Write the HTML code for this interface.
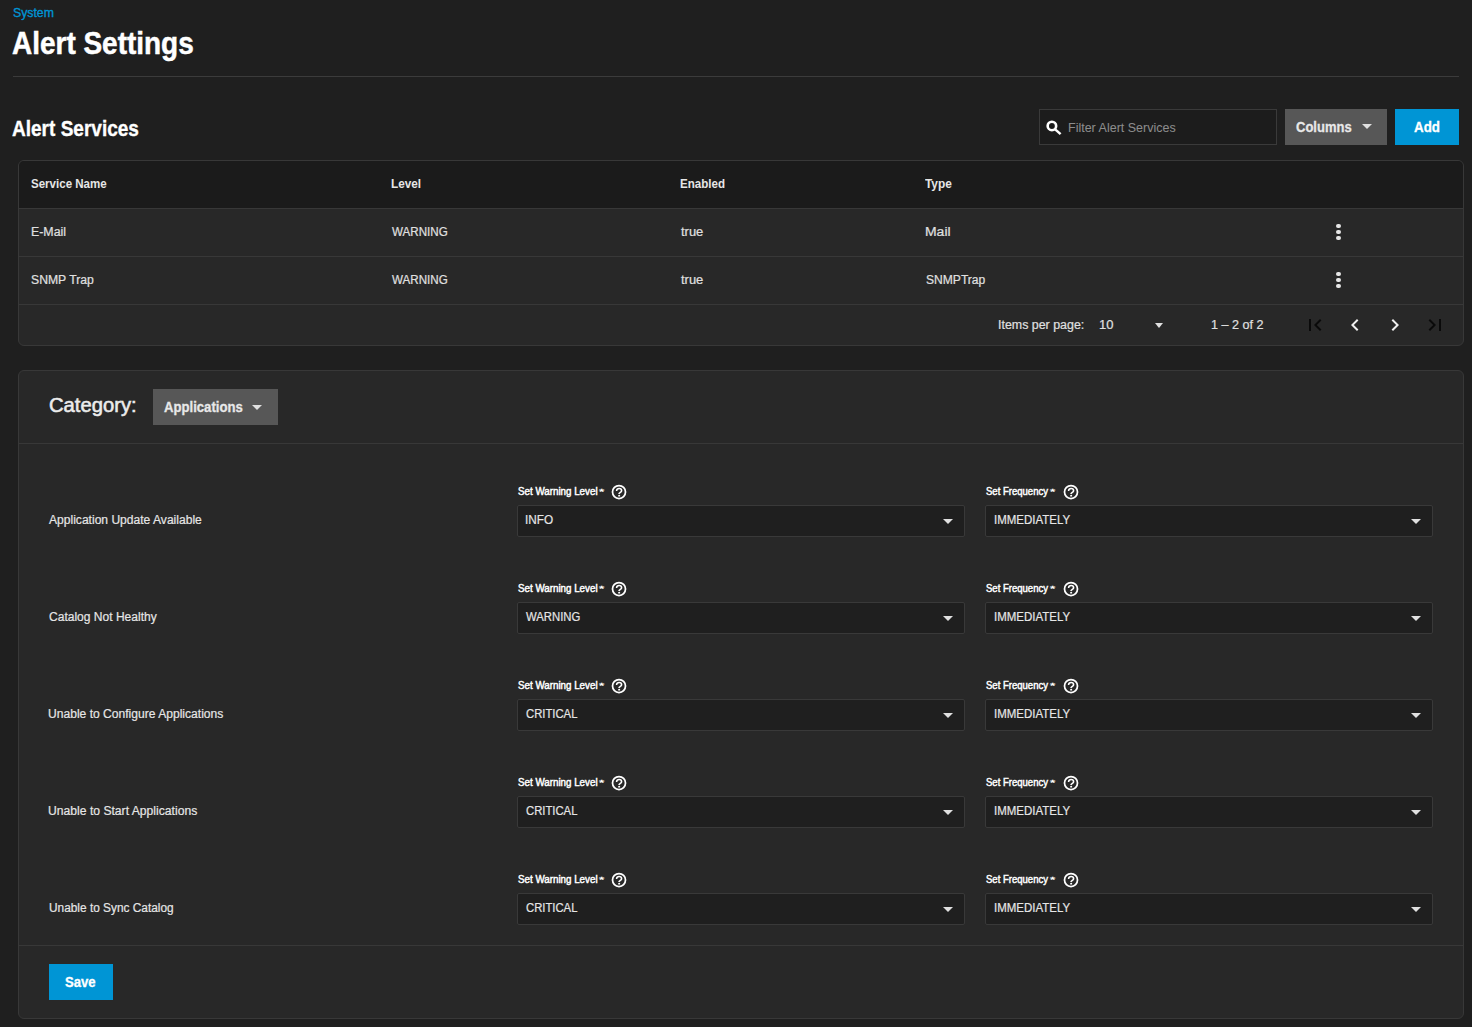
<!DOCTYPE html>
<html><head><meta charset="utf-8"><title>Alert Settings</title>
<style>
html,body{margin:0;padding:0;}
body{width:1472px;height:1027px;overflow:hidden;background:#1f1f1f;position:relative;font-family:"Liberation Sans",sans-serif;}
.box{position:absolute;box-sizing:content-box;}
.t{position:absolute;white-space:nowrap;line-height:normal;transform-origin:0 0;}
.tri{position:absolute;width:0;height:0;}
.ic{position:absolute;}
.dot{position:absolute;width:4.6px;height:4.6px;border-radius:50%;background:#e6e6e6;}
</style></head><body>
<div class="box" style="left:13px;top:76px;width:1446px;height:1px;background:#3b3b3b"></div>
<div class="box" style="left:1039px;top:109px;width:236px;height:34px;border:1px solid #3a3a3a;background:#1c1c1c"></div>
<svg class="ic" style="left:1044px;top:118px" width="20" height="20" viewBox="0 0 20 20"><circle cx="7.9" cy="7.95" r="4.25" fill="none" stroke="#fff" stroke-width="2.6"/><path d="M10.9 11.1 L16.6 16.1" stroke="#fff" stroke-width="2.5" stroke-linecap="butt"/></svg>
<div class="box" style="left:1285px;top:109px;width:102px;height:36px;background:#575757"></div>
<div class="tri" style="left:1362px;top:124px;border-left:5.0px solid transparent;border-right:5.0px solid transparent;border-top:5px solid #e0e0e0"></div>
<div class="box" style="left:1395px;top:109px;width:64px;height:36px;background:#0095d5"></div>
<div class="box" style="left:18px;top:160px;width:1444px;height:184px;border:1px solid #383838;border-radius:6px;background:#282828;overflow:hidden"><div class="box" style="left:0;top:0;width:1444px;height:47px;background:#1b1b1b;border-bottom:1px solid #383838"></div><div class="box" style="left:0;top:95px;width:1444px;height:1px;background:#383838"></div><div class="box" style="left:0;top:143px;width:1444px;height:1px;background:#383838"></div></div>
<div class="dot" style="left:1336.4px;top:223.7px"></div>
<div class="dot" style="left:1336.4px;top:229.7px"></div>
<div class="dot" style="left:1336.4px;top:235.7px"></div>
<div class="dot" style="left:1336.4px;top:271.7px"></div>
<div class="dot" style="left:1336.4px;top:277.7px"></div>
<div class="dot" style="left:1336.4px;top:283.7px"></div>
<div class="tri" style="left:1154.5px;top:323px;border-left:4.75px solid transparent;border-right:4.75px solid transparent;border-top:5px solid #e0e0e0"></div>
<svg class="ic" style="left:1303px;top:313px" width="24" height="24" viewBox="0 0 24 24"><path fill="#0a0a0a" d="M18.41 16.59L13.82 12l4.59-4.59L17 6l-6 6 6 6zM6 6h2v12H6z"/></svg>
<svg class="ic" style="left:1343px;top:313px" width="24" height="24" viewBox="0 0 24 24"><path fill="#f0f0f0" d="M15.41 7.41L14 6l-6 6 6 6 1.41-1.41L10.83 12z"/></svg>
<svg class="ic" style="left:1383px;top:313px" width="24" height="24" viewBox="0 0 24 24"><path fill="#f0f0f0" d="M10 6L8.59 7.41 13.17 12l-4.58 4.59L10 18l6-6z"/></svg>
<svg class="ic" style="left:1423px;top:313px" width="24" height="24" viewBox="0 0 24 24"><path fill="#0a0a0a" d="M5.59 7.41L10.18 12l-4.59 4.59L7 18l6-6-6-6zM16 6h2v12h-2z"/></svg>
<div class="box" style="left:18px;top:370px;width:1444px;height:647px;border:1px solid #383838;border-radius:6px;background:#282828"><div class="box" style="left:0;top:72px;width:1444px;height:1px;background:#383838"></div><div class="box" style="left:0;top:574px;width:1444px;height:1px;background:#383838"></div></div>
<div class="box" style="left:153px;top:389px;width:125px;height:36px;background:#575757"></div>
<div class="tri" style="left:252px;top:405.2px;border-left:5.25px solid transparent;border-right:5.25px solid transparent;border-top:5.2px solid #e0e0e0"></div>
<div class="box" style="left:517px;top:505px;width:446px;height:30px;border:1px solid #393939;border-radius:2px;background:#1f1f1f"></div>
<div class="box" style="left:985px;top:505px;width:446px;height:30px;border:1px solid #393939;border-radius:2px;background:#1f1f1f"></div>
<div class="tri" style="left:943px;top:519px;border-left:5.0px solid transparent;border-right:5.0px solid transparent;border-top:5px solid #e0e0e0"></div>
<div class="tri" style="left:1410.5px;top:519px;border-left:5.0px solid transparent;border-right:5.0px solid transparent;border-top:5px solid #e0e0e0"></div>
<svg class="ic" style="left:609.3px;top:482.0px" width="20" height="20" viewBox="0 0 20 20"><circle cx="10" cy="10" r="6.5" fill="none" stroke="#fff" stroke-width="1.75"/><path d="M7.6 8.9 C7.6 7.4 8.7 6.5 10.1 6.5 C11.5 6.5 12.6 7.4 12.6 8.7 C12.6 10.1 10.9 10.3 10.2 11.4 L10.1 12.2" fill="none" stroke="#fff" stroke-width="1.6"/><rect x="9.2" y="13.0" width="1.9" height="1.5" fill="#fff"/></svg>
<svg class="ic" style="left:1061.0px;top:482.0px" width="20" height="20" viewBox="0 0 20 20"><circle cx="10" cy="10" r="6.5" fill="none" stroke="#fff" stroke-width="1.75"/><path d="M7.6 8.9 C7.6 7.4 8.7 6.5 10.1 6.5 C11.5 6.5 12.6 7.4 12.6 8.7 C12.6 10.1 10.9 10.3 10.2 11.4 L10.1 12.2" fill="none" stroke="#fff" stroke-width="1.6"/><rect x="9.2" y="13.0" width="1.9" height="1.5" fill="#fff"/></svg>
<div class="box" style="left:517px;top:602px;width:446px;height:30px;border:1px solid #393939;border-radius:2px;background:#1f1f1f"></div>
<div class="box" style="left:985px;top:602px;width:446px;height:30px;border:1px solid #393939;border-radius:2px;background:#1f1f1f"></div>
<div class="tri" style="left:943px;top:616px;border-left:5.0px solid transparent;border-right:5.0px solid transparent;border-top:5px solid #e0e0e0"></div>
<div class="tri" style="left:1410.5px;top:616px;border-left:5.0px solid transparent;border-right:5.0px solid transparent;border-top:5px solid #e0e0e0"></div>
<svg class="ic" style="left:609.3px;top:579.0px" width="20" height="20" viewBox="0 0 20 20"><circle cx="10" cy="10" r="6.5" fill="none" stroke="#fff" stroke-width="1.75"/><path d="M7.6 8.9 C7.6 7.4 8.7 6.5 10.1 6.5 C11.5 6.5 12.6 7.4 12.6 8.7 C12.6 10.1 10.9 10.3 10.2 11.4 L10.1 12.2" fill="none" stroke="#fff" stroke-width="1.6"/><rect x="9.2" y="13.0" width="1.9" height="1.5" fill="#fff"/></svg>
<svg class="ic" style="left:1061.0px;top:579.0px" width="20" height="20" viewBox="0 0 20 20"><circle cx="10" cy="10" r="6.5" fill="none" stroke="#fff" stroke-width="1.75"/><path d="M7.6 8.9 C7.6 7.4 8.7 6.5 10.1 6.5 C11.5 6.5 12.6 7.4 12.6 8.7 C12.6 10.1 10.9 10.3 10.2 11.4 L10.1 12.2" fill="none" stroke="#fff" stroke-width="1.6"/><rect x="9.2" y="13.0" width="1.9" height="1.5" fill="#fff"/></svg>
<div class="box" style="left:517px;top:699px;width:446px;height:30px;border:1px solid #393939;border-radius:2px;background:#1f1f1f"></div>
<div class="box" style="left:985px;top:699px;width:446px;height:30px;border:1px solid #393939;border-radius:2px;background:#1f1f1f"></div>
<div class="tri" style="left:943px;top:713px;border-left:5.0px solid transparent;border-right:5.0px solid transparent;border-top:5px solid #e0e0e0"></div>
<div class="tri" style="left:1410.5px;top:713px;border-left:5.0px solid transparent;border-right:5.0px solid transparent;border-top:5px solid #e0e0e0"></div>
<svg class="ic" style="left:609.3px;top:676.0px" width="20" height="20" viewBox="0 0 20 20"><circle cx="10" cy="10" r="6.5" fill="none" stroke="#fff" stroke-width="1.75"/><path d="M7.6 8.9 C7.6 7.4 8.7 6.5 10.1 6.5 C11.5 6.5 12.6 7.4 12.6 8.7 C12.6 10.1 10.9 10.3 10.2 11.4 L10.1 12.2" fill="none" stroke="#fff" stroke-width="1.6"/><rect x="9.2" y="13.0" width="1.9" height="1.5" fill="#fff"/></svg>
<svg class="ic" style="left:1061.0px;top:676.0px" width="20" height="20" viewBox="0 0 20 20"><circle cx="10" cy="10" r="6.5" fill="none" stroke="#fff" stroke-width="1.75"/><path d="M7.6 8.9 C7.6 7.4 8.7 6.5 10.1 6.5 C11.5 6.5 12.6 7.4 12.6 8.7 C12.6 10.1 10.9 10.3 10.2 11.4 L10.1 12.2" fill="none" stroke="#fff" stroke-width="1.6"/><rect x="9.2" y="13.0" width="1.9" height="1.5" fill="#fff"/></svg>
<div class="box" style="left:517px;top:796px;width:446px;height:30px;border:1px solid #393939;border-radius:2px;background:#1f1f1f"></div>
<div class="box" style="left:985px;top:796px;width:446px;height:30px;border:1px solid #393939;border-radius:2px;background:#1f1f1f"></div>
<div class="tri" style="left:943px;top:810px;border-left:5.0px solid transparent;border-right:5.0px solid transparent;border-top:5px solid #e0e0e0"></div>
<div class="tri" style="left:1410.5px;top:810px;border-left:5.0px solid transparent;border-right:5.0px solid transparent;border-top:5px solid #e0e0e0"></div>
<svg class="ic" style="left:609.3px;top:773.0px" width="20" height="20" viewBox="0 0 20 20"><circle cx="10" cy="10" r="6.5" fill="none" stroke="#fff" stroke-width="1.75"/><path d="M7.6 8.9 C7.6 7.4 8.7 6.5 10.1 6.5 C11.5 6.5 12.6 7.4 12.6 8.7 C12.6 10.1 10.9 10.3 10.2 11.4 L10.1 12.2" fill="none" stroke="#fff" stroke-width="1.6"/><rect x="9.2" y="13.0" width="1.9" height="1.5" fill="#fff"/></svg>
<svg class="ic" style="left:1061.0px;top:773.0px" width="20" height="20" viewBox="0 0 20 20"><circle cx="10" cy="10" r="6.5" fill="none" stroke="#fff" stroke-width="1.75"/><path d="M7.6 8.9 C7.6 7.4 8.7 6.5 10.1 6.5 C11.5 6.5 12.6 7.4 12.6 8.7 C12.6 10.1 10.9 10.3 10.2 11.4 L10.1 12.2" fill="none" stroke="#fff" stroke-width="1.6"/><rect x="9.2" y="13.0" width="1.9" height="1.5" fill="#fff"/></svg>
<div class="box" style="left:517px;top:893px;width:446px;height:30px;border:1px solid #393939;border-radius:2px;background:#1f1f1f"></div>
<div class="box" style="left:985px;top:893px;width:446px;height:30px;border:1px solid #393939;border-radius:2px;background:#1f1f1f"></div>
<div class="tri" style="left:943px;top:907px;border-left:5.0px solid transparent;border-right:5.0px solid transparent;border-top:5px solid #e0e0e0"></div>
<div class="tri" style="left:1410.5px;top:907px;border-left:5.0px solid transparent;border-right:5.0px solid transparent;border-top:5px solid #e0e0e0"></div>
<svg class="ic" style="left:609.3px;top:870.0px" width="20" height="20" viewBox="0 0 20 20"><circle cx="10" cy="10" r="6.5" fill="none" stroke="#fff" stroke-width="1.75"/><path d="M7.6 8.9 C7.6 7.4 8.7 6.5 10.1 6.5 C11.5 6.5 12.6 7.4 12.6 8.7 C12.6 10.1 10.9 10.3 10.2 11.4 L10.1 12.2" fill="none" stroke="#fff" stroke-width="1.6"/><rect x="9.2" y="13.0" width="1.9" height="1.5" fill="#fff"/></svg>
<svg class="ic" style="left:1061.0px;top:870.0px" width="20" height="20" viewBox="0 0 20 20"><circle cx="10" cy="10" r="6.5" fill="none" stroke="#fff" stroke-width="1.75"/><path d="M7.6 8.9 C7.6 7.4 8.7 6.5 10.1 6.5 C11.5 6.5 12.6 7.4 12.6 8.7 C12.6 10.1 10.9 10.3 10.2 11.4 L10.1 12.2" fill="none" stroke="#fff" stroke-width="1.6"/><rect x="9.2" y="13.0" width="1.9" height="1.5" fill="#fff"/></svg>
<div class="box" style="left:49px;top:964px;width:64px;height:36px;background:#0095d5"></div>
<div class="t" style="left:13.15px;top:5.26px;font-size:13.08px;color:#0095d5;-webkit-text-stroke:0.35px #0095d5;transform:scaleX(0.938)">System</div>
<div class="t" style="left:12.30px;top:26.48px;font-size:30.52px;font-weight:700;color:#ffffff;-webkit-text-stroke:0.5px #ffffff;transform:scaleX(0.916)">Alert Settings</div>
<div class="t" style="left:12.42px;top:115.57px;font-size:21.80px;font-weight:700;color:#ffffff;-webkit-text-stroke:0.35px #ffffff;transform:scaleX(0.873)">Alert Services</div>
<div class="t" style="left:1068.10px;top:119.82px;font-size:12.79px;color:#8c8c8c;-webkit-text-stroke:0.05px #8c8c8c;transform:scaleX(0.978)">Filter Alert Services</div>
<div class="t" style="left:1295.98px;top:118.09px;font-size:15.26px;font-weight:700;color:#e8e8e8;-webkit-text-stroke:0.3px #e8e8e8;transform:scaleX(0.853)">Columns</div>
<div class="t" style="left:1414.07px;top:118.02px;font-size:15.12px;font-weight:700;color:#ffffff;-webkit-text-stroke:0.3px #ffffff;transform:scaleX(0.884)">Add</div>
<div class="t" style="left:30.65px;top:176.06px;font-size:13.08px;font-weight:700;color:#e6e6e6;transform:scaleX(0.882)">Service Name</div>
<div class="t" style="left:391.03px;top:176.06px;font-size:13.08px;font-weight:700;color:#e6e6e6;transform:scaleX(0.900)">Level</div>
<div class="t" style="left:680.05px;top:176.06px;font-size:13.08px;font-weight:700;color:#e6e6e6;transform:scaleX(0.884)">Enabled</div>
<div class="t" style="left:925.38px;top:176.06px;font-size:13.08px;font-weight:700;color:#e6e6e6;transform:scaleX(0.908)">Type</div>
<div class="t" style="left:30.61px;top:224.69px;font-size:12.50px;color:#e0e0e0;-webkit-text-stroke:0.2px #e0e0e0;transform:scaleX(0.989)">E-Mail</div>
<div class="t" style="left:392.34px;top:224.69px;font-size:12.50px;color:#e0e0e0;-webkit-text-stroke:0.2px #e0e0e0;transform:scaleX(0.929)">WARNING</div>
<div class="t" style="left:681.21px;top:224.69px;font-size:12.50px;color:#e0e0e0;-webkit-text-stroke:0.2px #e0e0e0;transform:scaleX(1.036)">true</div>
<div class="t" style="left:924.98px;top:224.69px;font-size:12.50px;color:#e0e0e0;-webkit-text-stroke:0.2px #e0e0e0;transform:scaleX(1.116)">Mail</div>
<div class="t" style="left:31.05px;top:272.69px;font-size:12.50px;color:#e0e0e0;-webkit-text-stroke:0.2px #e0e0e0;transform:scaleX(0.976)">SNMP Trap</div>
<div class="t" style="left:392.34px;top:272.69px;font-size:12.50px;color:#e0e0e0;-webkit-text-stroke:0.2px #e0e0e0;transform:scaleX(0.929)">WARNING</div>
<div class="t" style="left:681.21px;top:272.69px;font-size:12.50px;color:#e0e0e0;-webkit-text-stroke:0.2px #e0e0e0;transform:scaleX(1.036)">true</div>
<div class="t" style="left:925.56px;top:272.69px;font-size:12.50px;color:#e0e0e0;-webkit-text-stroke:0.2px #e0e0e0;transform:scaleX(0.966)">SNMPTrap</div>
<div class="t" style="left:998.38px;top:316.96px;font-size:13.08px;color:#e0e0e0;-webkit-text-stroke:0.2px #e0e0e0;transform:scaleX(0.949)">Items per page:</div>
<div class="t" style="left:1099.03px;top:316.96px;font-size:13.08px;color:#e0e0e0;-webkit-text-stroke:0.2px #e0e0e0;transform:scaleX(0.991)">10</div>
<div class="t" style="left:1210.76px;top:316.96px;font-size:13.08px;color:#e0e0e0;-webkit-text-stroke:0.2px #e0e0e0;transform:scaleX(0.962)">1 – 2 of 2</div>
<div class="t" style="left:48.99px;top:393.77px;font-size:19.48px;color:#ececec;-webkit-text-stroke:0.55px #ececec;transform:scaleX(1.038)">Category:</div>
<div class="t" style="left:163.67px;top:398.49px;font-size:15.26px;font-weight:700;color:#e8e8e8;-webkit-text-stroke:0.3px #e8e8e8;transform:scaleX(0.861)">Applications</div>
<div class="t" style="left:49.34px;top:512.06px;font-size:13.08px;color:#e6e6e6;-webkit-text-stroke:0.2px #e6e6e6;transform:scaleX(0.923)">Application Update Available</div>
<div class="t" style="left:517.96px;top:485.79px;font-size:10.17px;color:#ffffff;-webkit-text-stroke:0.45px #ffffff;transform:scaleX(0.963)">Set Warning Level</div>
<div class="t" style="left:599.13px;top:487.02px;font-size:7.27px;color:#ffffff;-webkit-text-stroke:0.3px #ffffff;transform:scaleX(1.848)">*</div>
<div class="t" style="left:986.17px;top:485.79px;font-size:10.17px;color:#ffffff;-webkit-text-stroke:0.45px #ffffff;transform:scaleX(0.938)">Set Frequency</div>
<div class="t" style="left:1050.13px;top:487.02px;font-size:7.27px;color:#ffffff;-webkit-text-stroke:0.3px #ffffff;transform:scaleX(1.848)">*</div>
<div class="t" style="left:525.44px;top:512.16px;font-size:13.08px;color:#e6e6e6;-webkit-text-stroke:0.2px #e6e6e6;transform:scaleX(0.900)">INFO</div>
<div class="t" style="left:993.56px;top:512.16px;font-size:13.08px;color:#e6e6e6;-webkit-text-stroke:0.2px #e6e6e6;transform:scaleX(0.879)">IMMEDIATELY</div>
<div class="t" style="left:48.80px;top:609.06px;font-size:13.08px;color:#e6e6e6;-webkit-text-stroke:0.2px #e6e6e6;transform:scaleX(0.920)">Catalog Not Healthy</div>
<div class="t" style="left:517.96px;top:582.79px;font-size:10.17px;color:#ffffff;-webkit-text-stroke:0.45px #ffffff;transform:scaleX(0.963)">Set Warning Level</div>
<div class="t" style="left:599.13px;top:584.02px;font-size:7.27px;color:#ffffff;-webkit-text-stroke:0.3px #ffffff;transform:scaleX(1.848)">*</div>
<div class="t" style="left:986.17px;top:582.79px;font-size:10.17px;color:#ffffff;-webkit-text-stroke:0.45px #ffffff;transform:scaleX(0.938)">Set Frequency</div>
<div class="t" style="left:1050.13px;top:584.02px;font-size:7.27px;color:#ffffff;-webkit-text-stroke:0.3px #ffffff;transform:scaleX(1.848)">*</div>
<div class="t" style="left:526.44px;top:609.16px;font-size:13.08px;color:#e6e6e6;-webkit-text-stroke:0.2px #e6e6e6;transform:scaleX(0.866)">WARNING</div>
<div class="t" style="left:993.56px;top:609.16px;font-size:13.08px;color:#e6e6e6;-webkit-text-stroke:0.2px #e6e6e6;transform:scaleX(0.879)">IMMEDIATELY</div>
<div class="t" style="left:48.49px;top:706.06px;font-size:13.08px;color:#e6e6e6;-webkit-text-stroke:0.2px #e6e6e6;transform:scaleX(0.924)">Unable to Configure Applications</div>
<div class="t" style="left:517.96px;top:679.79px;font-size:10.17px;color:#ffffff;-webkit-text-stroke:0.45px #ffffff;transform:scaleX(0.963)">Set Warning Level</div>
<div class="t" style="left:599.13px;top:681.02px;font-size:7.27px;color:#ffffff;-webkit-text-stroke:0.3px #ffffff;transform:scaleX(1.848)">*</div>
<div class="t" style="left:986.17px;top:679.79px;font-size:10.17px;color:#ffffff;-webkit-text-stroke:0.45px #ffffff;transform:scaleX(0.938)">Set Frequency</div>
<div class="t" style="left:1050.13px;top:681.02px;font-size:7.27px;color:#ffffff;-webkit-text-stroke:0.3px #ffffff;transform:scaleX(1.848)">*</div>
<div class="t" style="left:525.94px;top:706.16px;font-size:13.08px;color:#e6e6e6;-webkit-text-stroke:0.2px #e6e6e6;transform:scaleX(0.863)">CRITICAL</div>
<div class="t" style="left:993.56px;top:706.16px;font-size:13.08px;color:#e6e6e6;-webkit-text-stroke:0.2px #e6e6e6;transform:scaleX(0.879)">IMMEDIATELY</div>
<div class="t" style="left:48.49px;top:803.06px;font-size:13.08px;color:#e6e6e6;-webkit-text-stroke:0.2px #e6e6e6;transform:scaleX(0.929)">Unable to Start Applications</div>
<div class="t" style="left:517.96px;top:776.79px;font-size:10.17px;color:#ffffff;-webkit-text-stroke:0.45px #ffffff;transform:scaleX(0.963)">Set Warning Level</div>
<div class="t" style="left:599.13px;top:778.02px;font-size:7.27px;color:#ffffff;-webkit-text-stroke:0.3px #ffffff;transform:scaleX(1.848)">*</div>
<div class="t" style="left:986.17px;top:776.79px;font-size:10.17px;color:#ffffff;-webkit-text-stroke:0.45px #ffffff;transform:scaleX(0.938)">Set Frequency</div>
<div class="t" style="left:1050.13px;top:778.02px;font-size:7.27px;color:#ffffff;-webkit-text-stroke:0.3px #ffffff;transform:scaleX(1.848)">*</div>
<div class="t" style="left:525.94px;top:803.16px;font-size:13.08px;color:#e6e6e6;-webkit-text-stroke:0.2px #e6e6e6;transform:scaleX(0.863)">CRITICAL</div>
<div class="t" style="left:993.56px;top:803.16px;font-size:13.08px;color:#e6e6e6;-webkit-text-stroke:0.2px #e6e6e6;transform:scaleX(0.879)">IMMEDIATELY</div>
<div class="t" style="left:48.51px;top:900.06px;font-size:13.08px;color:#e6e6e6;-webkit-text-stroke:0.2px #e6e6e6;transform:scaleX(0.907)">Unable to Sync Catalog</div>
<div class="t" style="left:517.96px;top:873.79px;font-size:10.17px;color:#ffffff;-webkit-text-stroke:0.45px #ffffff;transform:scaleX(0.963)">Set Warning Level</div>
<div class="t" style="left:599.13px;top:875.02px;font-size:7.27px;color:#ffffff;-webkit-text-stroke:0.3px #ffffff;transform:scaleX(1.848)">*</div>
<div class="t" style="left:986.17px;top:873.79px;font-size:10.17px;color:#ffffff;-webkit-text-stroke:0.45px #ffffff;transform:scaleX(0.938)">Set Frequency</div>
<div class="t" style="left:1050.13px;top:875.02px;font-size:7.27px;color:#ffffff;-webkit-text-stroke:0.3px #ffffff;transform:scaleX(1.848)">*</div>
<div class="t" style="left:525.94px;top:900.16px;font-size:13.08px;color:#e6e6e6;-webkit-text-stroke:0.2px #e6e6e6;transform:scaleX(0.863)">CRITICAL</div>
<div class="t" style="left:993.56px;top:900.16px;font-size:13.08px;color:#e6e6e6;-webkit-text-stroke:0.2px #e6e6e6;transform:scaleX(0.879)">IMMEDIATELY</div>
<div class="t" style="left:65.41px;top:972.72px;font-size:15.12px;font-weight:700;color:#ffffff;-webkit-text-stroke:0.3px #ffffff;transform:scaleX(0.868)">Save</div>
</body></html>
